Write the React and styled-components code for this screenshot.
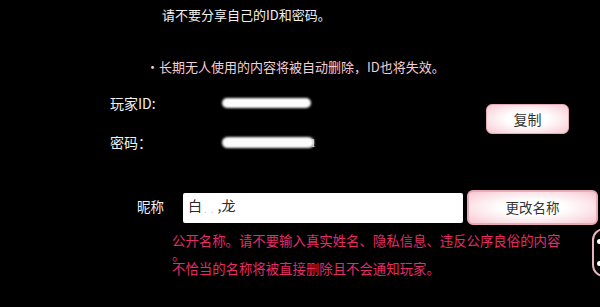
import React from "react";
import styled, { createGlobalStyle } from "styled-components";

const Global = createGlobalStyle`
  html, body { margin: 0; padding: 0; background: #000; }
  body { width: 600px; height: 307px; overflow: hidden; font-family: "Noto Sans CJK SC", "Noto Sans", sans-serif; }
`;

const Page = styled.div`
  position: relative;
  width: 600px;
  height: 307px;
  background: #000;
  padding-top: 6px;
  box-sizing: border-box;
  display: flex;
  flex-direction: column;
  align-items: flex-start;
`;

const Title = styled.div`
  margin-left: 162px;
  font-size: 13px;
  line-height: 18px;
  color: #f1f1f1;
`;

const Notice = styled.div`
  margin-left: 146px;
  margin-top: 34px;
  font-size: 13px;
  line-height: 18px;
  color: #f3cfda;
`;

const Credentials = styled.div`
  margin-left: 110px;
  margin-top: 15px;
  display: grid;
  grid-template-columns: 112px 264px 83px;
  grid-template-rows: 24px 24px;
  row-gap: 15px;
  align-items: center;
`;

const Label = styled.div`
  font-size: 14px;
  line-height: 24px;
  color: #f2f2f2;
`;

const Value = styled.div`
  display: flex;
  align-items: center;
  height: 24px;
`;

const Blob = styled.span`
  display: inline-block;
  width: ${(p) => p.$w}px;
  height: ${(p) => p.$h || 10}px;
  background: #fbfbfb;
  border-radius: 6px;
  filter: blur(1px);
`;

const Tail = styled.span`
  font-family: "Liberation Serif", serif;
  font-size: 12px;
  color: #ddd;
  margin-left: -4px;
  margin-top: 3px;
`;

const PinkButton = styled.button`
  box-sizing: border-box;
  width: ${(p) => p.$w}px;
  height: ${(p) => p.$h}px;
  border: ${(p) => p.$bw || 1.5}px solid #eaa9b6;
  border-radius: 6px;
  background: radial-gradient(ellipse at center, #ffffff 35%, #fbe3e7 70%, #f6c6cf 100%);
  color: #333;
  font-family: "Noto Sans CJK SC", sans-serif;
  font-size: ${(p) => p.$fs || 14}px;
  line-height: 1;
  padding: 0;
  display: flex;
  align-items: center;
  justify-content: center;
`;

const CopyCell = styled.div`
  grid-column: 3;
  grid-row: 1 / 3;
  align-self: start;
  margin-top: 13px;
`;

const NickRow = styled.div`
  margin-left: 137px;
  margin-top: 36px;
  display: flex;
  align-items: center;
`;

const NickLabel = styled.div`
  width: 46px;
  font-size: 13.5px;
  line-height: 18px;
  color: #f2f2f2;
  margin-top: -3px;
`;

const NameInput = styled.div`
  box-sizing: border-box;
  width: 280px;
  height: 30px;
  background: #fff;
  border-radius: 2px;
  margin-right: 4px;
  padding: 2px 0 0 5px;
  font-size: 14px;
  line-height: 20px;
  color: #2a2a2a;
  display: flex;
  align-items: flex-start;
`;

const Faint = styled.span`
  color: #c8c8c8;
  font-size: 10px;
  letter-spacing: 4px;
  margin: 4px 0 0 2px;
`;

const Notes = styled.div`
  margin-left: 172px;
  margin-top: 8px;
  font-size: 13.4px;
  line-height: 14px;
  color: #e52b69;
  white-space: nowrap;
  display: flex;
  flex-direction: column;
`;

const NoteLine = styled.div`
  height: 14px;
  line-height: 14px;
`;

const SideHandle = styled.div`
  position: absolute;
  left: 592px;
  top: 228px;
  width: 30px;
  height: 49px;
  box-sizing: border-box;
  border: 2px solid #e9b3bf;
  border-radius: 12px;
`;

const Dot = styled.span`
  position: absolute;
  left: 3px;
  top: ${(p) => p.$t}px;
  width: 5px;
  height: 5px;
  border-radius: 50%;
  background: #fff;
`;

export default function App() {
  return (
    <>
      <Global />
      <Page>
        <Title>请不要分享自己的ID和密码。</Title>
        <Notice>・长期无人使用的内容将被自动删除，ID也将失效。</Notice>
        <Credentials>
          <Label>玩家ID:</Label>
          <Value>
            <Blob $w={89} />
          </Value>
          <CopyCell>
            <PinkButton $w={83} $h={30}>复制</PinkButton>
          </CopyCell>
          <Label>密码：</Label>
          <Value>
            <Blob $w={92} $h={11} />
            <Tail>1</Tail>
          </Value>
        </Credentials>
        <NickRow>
          <NickLabel>昵称</NickLabel>
          <NameInput>
            白<Faint>..</Faint>,龙
          </NameInput>
          <PinkButton $w={131} $h={35} $bw={2} $fs={13.5}>更改名称</PinkButton>
        </NickRow>
        <Notes>
          <NoteLine>公开名称。请不要输入真实姓名、隐私信息、违反公序良俗的内容</NoteLine>
          <NoteLine>。</NoteLine>
          <NoteLine>不恰当的名称将被直接删除且不会通知玩家。</NoteLine>
        </Notes>
        <SideHandle>
          <Dot $t={9} />
          <Dot $t={31} />
        </SideHandle>
      </Page>
    </>
  );
}
